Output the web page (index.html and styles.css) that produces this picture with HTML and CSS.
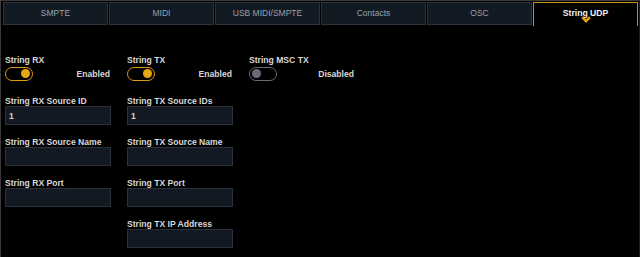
FILE: index.html
```html
<!DOCTYPE html>
<html>
<head>
<meta charset="utf-8">
<link rel="stylesheet" href="styles.css">
</head>
<body>
<div class="frame">
  <div class="tabs">
    <div class="tab">SMPTE</div>
    <div class="tab">MIDI</div>
    <div class="tab">USB MIDI/SMPTE</div>
    <div class="tab">Contacts</div>
    <div class="tab">OSC</div>
    <div class="tab active">String UDP
      <svg class="chev" width="10" height="7" viewBox="0 0 10 7"><polyline points="1.2,1.2 5,5.2 8.8,1.2" fill="none" stroke="#e3a312" stroke-width="2.4"/></svg>
    </div>
  </div>
  <div class="content">
    <div class="toggles">
      <div class="tcol">
        <div class="label">String RX</div>
        <div class="trow"><span class="switch on"><span class="knob"></span></span><span class="state">Enabled</span></div>
      </div>
      <div class="tcol">
        <div class="label">String TX</div>
        <div class="trow"><span class="switch on"><span class="knob"></span></span><span class="state">Enabled</span></div>
      </div>
      <div class="tcol">
        <div class="label">String MSC TX</div>
        <div class="trow"><span class="switch off"><span class="knob"></span></span><span class="state">Disabled</span></div>
      </div>
    </div>
    <div class="fields">
      <div class="field"><div class="label">String RX Source ID</div><div class="box">1</div></div>
      <div class="field"><div class="label">String TX Source IDs</div><div class="box">1</div></div>
      <div class="field"><div class="label">String RX Source Name</div><div class="box"></div></div>
      <div class="field"><div class="label">String TX Source Name</div><div class="box"></div></div>
      <div class="field"><div class="label">String RX Port</div><div class="box"></div></div>
      <div class="field"><div class="label">String TX Port</div><div class="box"></div></div>
      <div class="field empty"></div>
      <div class="field"><div class="label">String TX IP Address</div><div class="box"></div></div>
    </div>
  </div>
</div>
</body>
</html>
```
FILE: styles.css
```css
html, body {
  margin: 0;
  padding: 0;
  background: #000;
}
body {
  font-family: "Liberation Sans", Arial, sans-serif;
  color: #d6d6d8;
}
.frame {
  width: 640px;
  height: 257px;
  box-sizing: border-box;
  border-top: 1px solid #3a3a3c;
  border-left: 1px solid #3a3a3c;
  border-right: 1px solid #1c1c1e;
  overflow: hidden;
}
.tabs {
  display: flex;
  gap: 1px;
  padding: 1px 1px 0 2px;
  height: 24px;
  box-sizing: border-box;
}
.tab {
  flex: 1;
  position: relative;
  background: #121a24;
  border: 1px solid #2a323d;
  font-size: 8.5px;
  color: #9ba1a9;
  text-align: center;
  padding-top: 5px;
  line-height: 10px;
  box-sizing: border-box;
  height: 23px;
}
.tab.active {
  background: #000;
  border-color: #c88d10;
  border-bottom: none;
  color: #f2f2f2;
  font-weight: bold;
  font-size: 8.6px;
  height: 24px;
}
.chev {
  position: absolute;
  left: 50%;
  top: 13px;
  margin-left: -5px;
}
.content {
  padding-left: 4px;
}
.label {
  font-size: 8.6px;
  font-weight: bold;
  line-height: 10px;
  color: #d8d8da;
  white-space: nowrap;
}
.toggles {
  display: grid;
  grid-template-columns: 106px 106px 106px;
  column-gap: 16px;
  margin-top: 30px;
}
.trow {
  display: flex;
  justify-content: space-between;
  align-items: center;
  margin-top: 2px;
  height: 14px;
}
.switch {
  position: relative;
  display: block;
  width: 28px;
  height: 14px;
  box-sizing: border-box;
  border-radius: 7px;
  border: 1.5px solid #d99a12;
}
.switch.off {
  border-color: #6a6976;
}
.knob {
  position: absolute;
  top: 1px;
  width: 9px;
  height: 9px;
  border-radius: 50%;
  background: #e6a515;
  right: 2px;
}
.switch.off .knob {
  right: auto;
  left: 2px;
  background: #6c6a7a;
}
.state {
  font-size: 8.6px;
  font-weight: bold;
  color: #d8d8da;
  padding-right: 1px;
}
.fields {
  display: grid;
  grid-template-columns: 106px 106px;
  column-gap: 16px;
  row-gap: 12px;
  margin-top: 15px;
}
.box {
  height: 19px;
  box-sizing: border-box;
  background: #121922;
  border: 1px solid #2a313b;
  font-size: 8.6px;
  font-weight: bold;
  color: #d0d0d2;
  padding: 4px 0 0 3px;
  line-height: 10px;
}
```
